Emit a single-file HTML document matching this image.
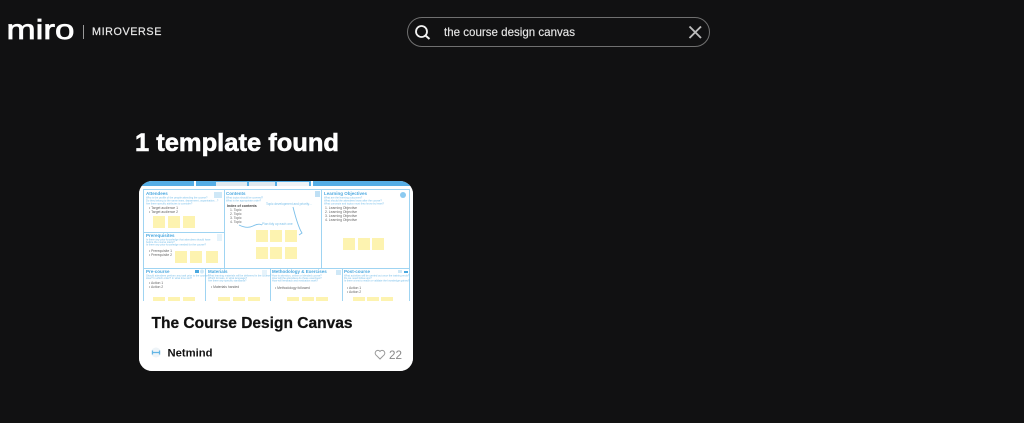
<!DOCTYPE html>
<html><head><meta charset="utf-8"><style>
html,body{margin:0;padding:0;background:#111112;width:1024px;height:423px;overflow:hidden}
svg{display:block}
text{font-family:"Liberation Sans",sans-serif}
.p{fill:#fff;stroke:#9fd4f2;stroke-width:1}
.s{fill:#fdf3b0}
.h{fill:#4aa8e0;font-size:4.5px;font-weight:bold}
.t{fill:#7cc0ea;font-size:2.6px}
.b{fill:#666;font-size:3.4px}
</style></head><body>
<svg width="1024" height="423" viewBox="0 0 1024 423" xmlns="http://www.w3.org/2000/svg">
<defs><filter id="bl" x="0" y="0" width="1" height="1"><feGaussianBlur stdDeviation=".25"/></filter></defs>
<text x="6.500" y="39" fill="#fff" stroke="#fff" stroke-width=".7" font-size="28" textLength="68" lengthAdjust="spacingAndGlyphs">miro</text>
<rect x="83" y="25" width="1" height="14" fill="#999"/>
<text x="92" y="35" fill="#e8e8e8" stroke="#e8e8e8" stroke-width=".2" font-size="11" letter-spacing=".6" textLength="70" lengthAdjust="spacingAndGlyphs">MIROVERSE</text>

<rect x="407.500" y="17.500" width="302" height="29" rx="14.500" fill="#111112" stroke="#707070"/>
<circle cx="421.500" cy="31.500" r="5.500" fill="none" stroke="#f2f2f2" stroke-width="1.800"/>
<path d="M425.500 35.500l4 3.500" stroke="#f2f2f2" stroke-width="2" fill="none"/>
<text x="444" y="36" fill="#e6e6e6" stroke="#e6e6e6" stroke-width=".15" font-size="12" textLength="131" lengthAdjust="spacingAndGlyphs">the course design canvas</text>
<path d="M689.500 26.500l11.500 11.500M701 26.500l-11.500 11.500" stroke="#bdbdbd" stroke-width="1.900" fill="none"/>

<text x="135" y="151" fill="#fff" font-size="25" font-weight="bold" stroke="#fff" stroke-width=".6" textLength="204" lengthAdjust="spacingAndGlyphs">1 template found</text>

<clipPath id="c"><rect x="139" y="181" width="274" height="190" rx="13"/></clipPath>
<g clip-path="url(#c)">
<rect x="139" y="181" width="274" height="190" fill="#fff"/>
<g filter="url(#bl)">
<rect x="139" y="181" width="274" height="5" fill="#55aee6"/>
<rect x="139" y="186" width="274" height="115" fill="#fff"/>
<rect x="194" y="181" width="2" height="5" fill="#fff"/>
<rect x="216" y="182" width="31" height="4" fill="#dfe9ef"/>
<rect x="249" y="182" width="26" height="4" fill="#dfe9ef"/>
<rect x="277" y="182" width="32" height="4" fill="#eef3f6"/>
<rect x="311" y="181" width="2" height="5" fill="#fff"/>

<rect class="p" x="143.500" y="189.500" width="81" height="43"/>
<rect class="p" x="143.500" y="232.500" width="81" height="36"/>
<rect class="p" x="224.500" y="189.500" width="97" height="79"/>
<rect class="p" x="321.500" y="189.500" width="88" height="79"/>
<rect class="p" x="143.500" y="268.500" width="62" height="33"/>
<rect class="p" x="205.500" y="268.500" width="65" height="33"/>
<rect class="p" x="270.500" y="268.500" width="72" height="33"/>
<rect class="p" x="342.500" y="268.500" width="67" height="33"/>

<text class="h" x="146" y="195">Attendees</text>
<text class="t" x="146" y="198.500">Who is the profile of the people attending the course?</text>
<text class="t" x="146" y="201.500">Do they belong to the same team, department, organisation…?</text>
<text class="t" x="146" y="204.500">Are there specific attributes to consider?</text>
<text class="b" x="149" y="209">• Target audience 1</text>
<text class="b" x="149" y="213">• Target audience 2</text>

<text class="h" x="146" y="237">Prerequisites</text>
<text class="t" x="146" y="240.500">Is there any prior knowledge that attendees should have</text>
<text class="t" x="146" y="243">before the course starts?</text>
<text class="t" x="146" y="245.500">Is there any prior knowledge needed for the course?</text>
<text class="b" x="149" y="252">• Prerequisite 1</text>
<text class="b" x="149" y="256">• Prerequisite 2</text>

<text class="h" x="226" y="195">Contents</text>
<text class="t" x="226" y="198.500">What topics should be covered?</text>
<text class="t" x="226" y="201.500">What is the appropriate order?</text>
<text x="227" y="207" fill="#444" font-size="3.600" font-weight="bold">Index of contents</text>
<text class="b" x="230" y="211">1. Topic</text>
<text class="b" x="230" y="215">2. Topic</text>
<text class="b" x="230" y="219">3. Topic</text>
<text class="b" x="230" y="223">4. Topic</text>
<text class="t" x="266" y="205" style="font-size:3.200px">Topic development and priority…</text>
<text class="t" x="262" y="225" style="font-size:3.200px">Plan tidy up each one</text>
<path d="M239 225q8 4 14 1t9-1" fill="none" stroke="#7cc0ea" stroke-width=".9"/>
<path d="M293 207q5 20 9 26l-3 2" fill="none" stroke="#7cc0ea" stroke-width=".9"/>

<text class="h" x="324" y="195">Learning Objectives</text>
<text class="t" x="324" y="198.500">What are the learning outcomes?</text>
<text class="t" x="324" y="201.500">What should the attendees know after the course?</text>
<text class="t" x="324" y="204.500">What concepts and topics must they know by heart?</text>
<text class="b" x="325" y="209">1. Learning Objective</text>
<text class="b" x="325" y="213">2. Learning Objective</text>
<text class="b" x="325" y="217">3. Learning Objective</text>
<text class="b" x="325" y="221">4. Learning Objective</text>

<text class="h" x="146" y="273">Pre-course</text>
<text class="t" x="146" y="276.500">Should attendees perform any task prior to the course?</text>
<text class="t" x="146" y="279">How? In which order? In what time slot?</text>
<text class="b" x="149" y="284">• Action 1</text>
<text class="b" x="149" y="288">• Action 2</text>

<text class="h" x="208" y="273">Materials</text>
<text class="t" x="208" y="276.500">What learning materials will be delivered in the course?</text>
<text class="t" x="208" y="279">Which formats, in what language?</text>
<text class="t" x="208" y="281.500">Are there any specific standards?</text>
<text class="b" x="211" y="288">• Materials handed</text>

<text class="h" x="272" y="273">Methodology &amp; Exercises</text>
<text class="t" x="272" y="276.500">How is attention, online or blended course?</text>
<text class="t" x="272" y="279">How will the attendees do these exercises?</text>
<text class="t" x="272" y="281.500">How will feedback and evaluation work?</text>
<text class="b" x="275" y="289">• Methodology followed</text>

<text class="h" x="344" y="273">Post-course</text>
<text class="t" x="344" y="276.500">What activities will be carried out once the training ends?</text>
<text class="t" x="344" y="279">Do we need follow-ups?</text>
<text class="t" x="344" y="281.500">Is there a test to reach or validate the knowledge gained?</text>
<text class="b" x="347" y="289">• Action 1</text>
<text class="b" x="347" y="293">• Action 2</text>

<g>
<rect class="s" x="153" y="216" width="12" height="12"/><rect class="s" x="168" y="216" width="12" height="12"/><rect class="s" x="183" y="216" width="12" height="12"/>
<rect class="s" x="175" y="251" width="12" height="12"/><rect class="s" x="190" y="251" width="12" height="12"/><rect class="s" x="206" y="251" width="12" height="12"/>
<rect class="s" x="256" y="230" width="12" height="12"/><rect class="s" x="270" y="230" width="12" height="12"/><rect class="s" x="285" y="230" width="12" height="12"/>
<rect class="s" x="256" y="247" width="12" height="12"/><rect class="s" x="270" y="247" width="12" height="12"/><rect class="s" x="285" y="247" width="12" height="12"/>
<rect class="s" x="343" y="238" width="12" height="12"/><rect class="s" x="358" y="238" width="12" height="12"/><rect class="s" x="372" y="238" width="12" height="12"/>
<rect class="s" x="153" y="297" width="12" height="5"/><rect class="s" x="168" y="297" width="12" height="5"/><rect class="s" x="183" y="297" width="12" height="5"/>
<rect class="s" x="218" y="297" width="12" height="5"/><rect class="s" x="233" y="297" width="12" height="5"/><rect class="s" x="248" y="297" width="12" height="5"/>
<rect class="s" x="287" y="297" width="12" height="5"/><rect class="s" x="302" y="297" width="12" height="5"/><rect class="s" x="316" y="297" width="12" height="5"/>
<rect class="s" x="353" y="297" width="12" height="5"/><rect class="s" x="367" y="297" width="12" height="5"/><rect class="s" x="381" y="297" width="12" height="5"/>
</g>
<rect x="214" y="192" width="8" height="6" fill="#cfe8f7"/>
<rect x="217" y="234" width="5" height="7" fill="#e6f3fb"/>
<rect x="195" y="270" width="4" height="3" fill="#4aa8e0"/><circle cx="202" cy="271.500" r="2" fill="#cfe8f7"/>
<circle cx="403" cy="195" r="3" fill="#8ccaf0"/>
<rect x="262" y="270" width="5" height="5" fill="#e6f3fb"/>
<rect x="336" y="270" width="5" height="5" fill="#cfe8f7"/>
<rect x="398" y="270" width="4" height="3" fill="#cfe8f7"/><rect x="404" y="271" width="4" height="2" fill="#4aa8e0"/>
<rect x="315" y="191" width="5" height="6" fill="#bfe0f5"/>
</g>
<rect x="139" y="301" width="274" height="70" fill="#fff"/>
</g>

<text x="151.500" y="328" fill="#111" stroke="#111" stroke-width=".25" font-size="16" font-weight="bold" textLength="201" lengthAdjust="spacingAndGlyphs">The Course Design Canvas</text>
<circle cx="156" cy="352.500" r="5" fill="#eef4f8"/>
<path d="M152.500 350.500v4M159.500 350.500v4M152.500 352.500h7" stroke="#62b5e5" stroke-width="1.200" fill="none"/>
<text x="167.500" y="356.500" fill="#111" font-size="11" font-weight="bold" textLength="45" lengthAdjust="spacingAndGlyphs">Netmind</text>
<path d="M380 359l-4.200-4.200a2.700 2.700 0 0 1 4.200-3.400a2.700 2.700 0 0 1 4.200 3.400z" fill="none" stroke="#999" stroke-width="1"/>
<text x="389" y="359" fill="#888" font-size="12" textLength="13" lengthAdjust="spacingAndGlyphs">22</text>
</svg>
</body></html>
